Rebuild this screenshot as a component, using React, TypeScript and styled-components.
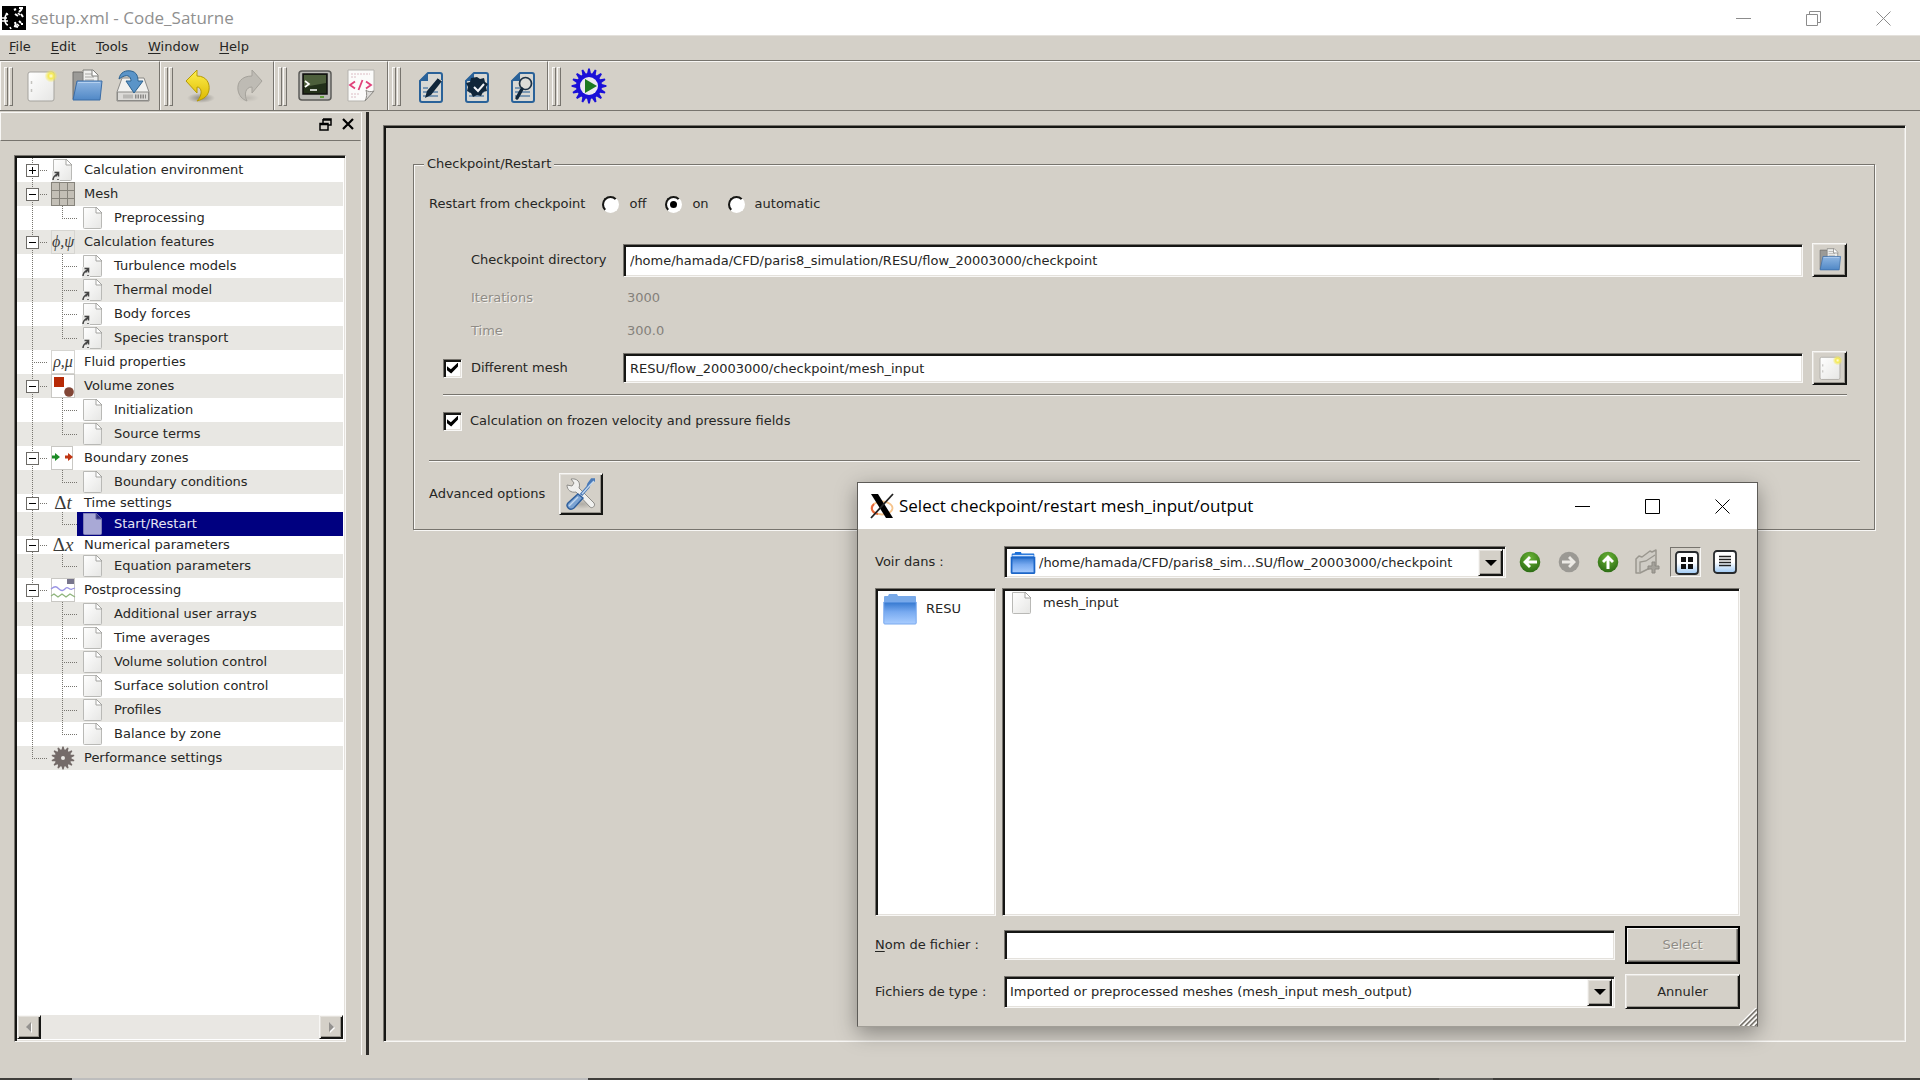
import React from "react";
import styled, { createGlobalStyle, css } from "styled-components";

const c = {
  face: "#d4d0c8",
  text: "#262624",
  dim: "#8f8c86",
  dark: "#77746e",
  black: "#161614",
  light: "#f8f7f5",
  soft: "#e4e1dc",
  zebra: "#e8e7e3",
  navy: "#000080",
};

const uiFont = `"DejaVu Sans", Verdana, sans-serif`;
const titleFont = `"Open Sans", "Segoe UI", sans-serif`;

const Global = createGlobalStyle`
  *, *::before, *::after { box-sizing: border-box; }
  body { margin: 0; background: ${c.face}; color: ${c.text}; font: 13px/20px ${uiFont}; }
  button, input, select { font: inherit; color: inherit; }
  button { padding: 0; border: 0; background: none; }
  svg { display: block; flex: none; overflow: visible; }
`;

const sunken = css`
  border: 1px solid;
  border-color: ${c.dark} ${c.light} ${c.light} ${c.dark};
  box-shadow: inset 2px 2px 0 ${c.black}, inset -1px -1px 0 ${c.soft};
`;

const raised = css`
  border: 1px solid;
  border-color: ${c.light} ${c.black} ${c.black} ${c.light};
  box-shadow: inset 1px 1px 0 ${c.soft}, inset -1px -1px 0 ${c.black}, inset -2px -2px 0 #98958e;
  background: ${c.face};
`;

/* ---------- window frame ---------- */

const Shell = styled.div`
  position: relative;
  display: flex;
  flex-direction: column;
  min-height: 100vh;
`;

const TitleBar = styled.header<{ $dialog?: boolean }>`
  display: flex;
  align-items: center;
  gap: 5px;
  height: ${(p) => (p.$dialog ? 46 : 35)}px;
  padding: ${(p) => (p.$dialog ? "0 11px 0 12px" : "0 13px 0 2px")};
  background: #fff;
  color: ${(p) => (p.$dialog ? "#000" : "#909090")};
  font: 17px/24px ${titleFont};
`;

const Title = styled.h1`
  flex: 1;
  margin: 0;
  font: inherit;
`;

const WindowButtons = styled.div`
  display: flex;
  gap: 24px;
`;

const WindowButton = styled.button`
  display: grid;
  place-items: center;
  width: 46px;
  height: 30px;
`;

const MenuBar = styled.nav`
  display: flex;
  gap: 20px;
  height: 25px;
  padding: 1px 9px 0;
  border-top: 1px solid ${c.soft};
`;

const MenuItem = styled.button`
  height: 20px;
  line-height: 20px;
`;

const Mnemonic = styled.span`
  text-decoration: underline;
  text-underline-offset: 2px;
`;

const ToolBar = styled.div`
  display: flex;
  height: 51px;
  margin-bottom: 1px;
  border-top: 1px solid ${c.dark};
  border-bottom: 1px solid ${c.dark};
`;

const ToolGroup = styled.div`
  display: flex;
  align-items: center;
  padding: 0 3px;
  border-top: 1px solid ${c.light};
  border-left: 1px solid ${c.light};
  border-right: 1px solid ${c.dark};
  &:last-child { flex: 1; border-right: 0; }
`;

const Handle = styled.span`
  display: flex;
  gap: 1px;
  width: 9px;
  height: 39px;
  margin-right: 5px;
  &::before, &::after {
    content: "";
    flex: 1;
    border: 1px solid;
    border-color: ${c.light} ${c.dark} ${c.dark} ${c.light};
  }
`;

const ToolButton = styled.button`
  display: grid;
  place-items: center;
  width: 46px;
  height: 42px;
`;

/* ---------- dock ---------- */

const Body = styled.div`
  display: flex;
  flex: 1;
  margin-bottom: 23px;
`;

const Dock = styled.aside`
  display: flex;
  flex-direction: column;
  width: 362px;
  border-right: 1px solid ${c.light};
`;

const DockHeader = styled.div`
  display: flex;
  justify-content: flex-end;
  gap: 9px;
  height: 29px;
  padding: 4px 5px 0 0;
  border: 1px solid;
  border-color: ${c.light} ${c.face} ${c.dark} ${c.light};
`;

const DockButton = styled.button`
  display: grid;
  place-items: center;
  width: 14px;
  height: 14px;
`;

const Splitter = styled.div`
  width: 7px;
  border-right: 3px solid #2e2c29;
`;

const TreeBox = styled.div`
  display: flex;
  flex: 1;
  flex-direction: column;
  justify-content: space-between;
  margin: 14px 15px 13px 14px;
  padding: 2px;
  background: #fff;
  ${sunken}
`;

const Tree = styled.ul`
  margin: 0;
  padding: 0;
  list-style: none;
`;

const Row = styled.li<{ $short?: boolean }>`
  display: flex;
  height: ${(p) => (p.$short ? 18 : 24)}px;
  padding-left: 9px;
  &:nth-child(even) { background: ${c.zebra}; }
`;

const dotsV = "repeating-linear-gradient(#77756f 0 1px, transparent 1px 2px)";
const dotsH = "repeating-linear-gradient(90deg, #77756f 0 1px, transparent 1px 2px)";

type Branch = "pass" | "tee" | "end";

const Guide = styled.span<{ $line: Branch; $child?: boolean }>`
  display: flex;
  align-items: center;
  width: 21px;
  margin-left: ${(p) => (p.$child ? 9 : 0)}px;
  background-repeat: no-repeat;
  background-image: ${(p) => (p.$line === "pass" ? dotsV : `${dotsV}, ${dotsH}`)};
  background-size: 1px ${(p) => (p.$line === "end" ? "50%" : "100%")}, 15px 1px;
  background-position: 6px 0, 6px 50%;
`;

const Expander = styled.button`
  display: grid;
  place-items: center;
  width: 13px;
  height: 13px;
  border: 1px solid #6d6b67;
  background: #fff;
`;

const Node = styled.span<{ $selected?: boolean; $child?: boolean }>`
  display: flex;
  flex: 1;
  align-items: center;
  gap: ${(p) => (p.$child ? 10 : 9)}px;
  padding-left: ${(p) => (p.$child ? 5 : 4)}px;
  white-space: nowrap;
  background: ${(p) => (p.$selected ? c.navy : "transparent")};
  color: ${(p) => (p.$selected ? "#e6e6f4" : "inherit")};
`;

const ScrollBar = styled.div`
  display: flex;
  justify-content: space-between;
  height: 24px;
  background: #e9e7e3;
`;

const ScrollButton = styled.button`
  display: grid;
  place-items: center;
  width: 24px;
  height: 24px;
  ${raised}
`;

/* ---------- settings panel ---------- */

const Panel = styled.main`
  flex: 1;
  min-width: 0;
  margin: 13px 14px;
  padding: 28px 30px 27px 29px;
  ${sunken}
`;

const Group = styled.fieldset`
  min-width: 0;
  margin: 0;
  padding: 20px 14px 14px 15px;
  border: 1px solid ${c.dark};
  box-shadow: 1px 1px 0 ${c.light}, inset 1px 1px 0 ${c.light};
`;

const Legend = styled.legend`
  margin-left: -5px;
  padding: 0 3px;
  background: ${c.face};
`;

const Line = styled.div`
  display: flex;
  align-items: center;
  min-height: 20px;
`;

const RadioLabel = styled.label`
  display: flex;
  align-items: center;
  gap: 10px;
  margin-left: 17px;
  & + & { margin-left: 19px; }
`;

const Radio = styled.input`
  appearance: none;
  display: grid;
  place-items: center;
  width: 17px;
  height: 17px;
  margin: 0;
  border: 2px solid;
  border-color: ${c.black} #fff #fff ${c.black};
  border-radius: 50%;
  background: #fff;
  &:checked::before {
    content: "";
    width: 7px;
    height: 7px;
    border-radius: 50%;
    background: #000;
  }
`;

const Indent = styled.div`
  margin: 29px 13px 0 14px;
`;

const Fields = styled.div`
  display: grid;
  grid-template-columns: 28px 152px 1fr 35px;
  grid-template-rows: 34px 25px 25px 34px;
  row-gap: 8px;
  align-items: center;
`;

const Label = styled.label<{ $dim?: boolean }>`
  grid-column: 2;
  color: ${(p) => (p.$dim ? c.dim : "inherit")};
  text-shadow: ${(p) => (p.$dim ? "1px 1px 0 #f4f2ee" : "none")};
`;

const Value = styled.output`
  grid-column: 3 / 5;
  padding-left: 4px;
  color: #84817b;
`;

const TextBox = styled.input<{ $tall?: boolean }>`
  width: 100%;
  height: ${(p) => (p.$tall ? 33 : 30)}px;
  padding: 0 6px;
  background: #fff;
  ${sunken}
`;

const FieldBox = styled(TextBox)`
  width: auto;
  margin-right: 9px;
`;

const SquareButton = styled.button<{ $large?: boolean }>`
  display: grid;
  place-items: center;
  width: ${(p) => (p.$large ? 44 : 35)}px;
  height: ${(p) => (p.$large ? 42 : 34)}px;
  ${raised}
`;

const Check = styled.input`
  appearance: none;
  display: grid;
  place-items: center;
  width: 19px;
  height: 19px;
  margin: 0;
  background: #fff;
  ${sunken}
  &:checked::before {
    content: "";
    width: 11px;
    height: 11px;
    background: #000;
    clip-path: polygon(0 35%, 35% 62%, 100% 0, 100% 36%, 38% 100%, 0 70%);
  }
`;

const Rule = styled.hr<{ $space: number }>`
  height: 2px;
  margin: ${(p) => p.$space}px 0 0;
  border: 0;
  border-top: 1px solid ${c.dark};
  border-bottom: 1px solid ${c.light};
`;

const FrozenLabel = styled.label`
  display: flex;
  align-items: center;
  gap: 8px;
  margin-top: 15px;
`;

const Advanced = styled(Line)`
  gap: 14px;
  margin-top: 11px;
`;

/* ---------- file dialog ---------- */

const Dialog = styled.section`
  position: absolute;
  top: 482px;
  left: 857px;
  width: 901px;
  border: 1px solid #5d5b57;
  border-bottom-color: #a19e97;
  background: ${c.face};
  box-shadow: 0 6px 20px rgba(0, 0, 0, 0.36);
`;

const DialogBody = styled.form`
  display: flex;
  flex-direction: column;
  gap: 10px;
  padding: 17px;
`;

const DialogRow = styled.div`
  display: grid;
  grid-template-columns: 129px 1fr 115px;
  align-items: center;
`;

const LookIn = styled.div`
  display: flex;
  align-items: center;
  gap: 8px;
`;

const LookInLabel = styled.label`
  width: 121px;
`;

const Combo = styled.div`
  display: flex;
  flex: 1;
  align-items: center;
  height: 32px;
  margin-right: 10px;
  padding: 2px 2px 1px 5px;
  background: #fff;
  ${sunken}
  ${LookIn} & { margin-right: 0; padding-left: 6px; gap: 4px; }
`;

const Select = styled.select`
  appearance: none;
  flex: 1;
  min-width: 0;
  height: 26px;
  padding: 0;
  border: 0;
  background: transparent;
`;

const Arrow = styled.span`
  display: grid;
  place-items: center;
  width: 25px;
  height: 27px;
  ${raised}
`;

const NavButton = styled.button<{ $on?: boolean }>`
  display: grid;
  place-items: center;
  width: 31px;
  height: 30px;
  border: 1px solid transparent;
  ${(p) => p.$on && css`
    padding: 2px 0 0 2px;
    border-color: ${c.dark} ${c.light} ${c.light} ${c.dark};
  `}
`;

const Lists = styled.div`
  display: grid;
  grid-template-columns: 121px 1fr;
  gap: 6px;
  height: 328px;
`;

const List = styled.ul`
  margin: 0;
  padding: 2px 7px;
  list-style: none;
  background: #fff;
  ${sunken}
`;

const Item = styled.li<{ $big?: boolean }>`
  display: flex;
  align-items: center;
  gap: 9px;
  height: ${(p) => (p.$big ? 36 : 24)}px;
`;

const NameBox = styled(TextBox)`
  width: auto;
  margin-right: 10px;
`;

const PushButton = styled.button<{ $default?: boolean }>`
  height: ${(p) => (p.$default ? 38 : 35)}px;
  ${raised}
  ${(p) => p.$default && css`
    border: 2px solid #000;
    box-shadow: inset 1px 1px 0 ${c.light}, inset -1px -1px 0 #5f5d58, inset -2px -2px 0 #98958e;
  `}
  &:disabled { color: ${c.dim}; text-shadow: 1px 1px 0 #f4f2ee; }
`;

const Grip = styled.span`
  position: absolute;
  right: 0;
  bottom: 0;
  overflow: hidden;
`;

/* ---------- bottom edge ---------- */

const Edge = styled.footer`
  display: grid;
  grid-template-columns: 72px 516px 851px 54px 1fr;
  height: 2px;
  background: #3f3e3b;
`;

const EdgePart = styled.span<{ $tone: string }>`
  background: ${(p) => p.$tone};
`;

/* ---------- drawings ---------- */

const AppIcon = () => (
  <svg width="24" height="24" viewBox="0 0 24 24">
    <rect width="24" height="24" fill="#000" />
    <g stroke="#fff" fill="none" strokeWidth="1.6">
      <path d="M6 8C2 8 2 18 6 19M0 12h5M0 15h6M4 7l2 2" />
      <path d="M12 4l2-1M17 2h4M20 3l-3 3M13 8l3 2M19 8l2 3M13 16l1 4M17 15l2 2M12 20l4 1M20 19v-2" strokeWidth="2" />
      <path d="M16 7l2 2M15 18l2 2M8 21l1 2" />
    </g>
  </svg>
);

const Defs = styled.svg`
  position: absolute;
`;

const Gradients = () => (
  <Defs width="0" height="0" aria-hidden="true">
    <defs>
      <linearGradient id="paper" x1="0" y1="0" x2="1" y2="1"><stop offset="0" stopColor="#fff" /><stop offset="1" stopColor="#e6e6e4" /></linearGradient>
      <linearGradient id="blue" x1="0" y1="0" x2="0" y2="1"><stop offset="0" stopColor="#8fb6e2" /><stop offset="1" stopColor="#5088c6" /></linearGradient>
      <linearGradient id="folder" x1="0" y1="0" x2="0" y2="1"><stop offset="0" stopColor="#3377cf" /><stop offset=".45" stopColor="#78aaf0" /><stop offset="1" stopColor="#a9cdff" /></linearGradient>
      <linearGradient id="gold" x1="0" y1="0" x2="0" y2="1"><stop offset="0" stopColor="#fff04d" /><stop offset="1" stopColor="#dcb800" /></linearGradient>
      <linearGradient id="tile" x1="0" y1="0" x2="0" y2="1"><stop offset=".5" stopColor="#fff" /><stop offset="1" stopColor="#9cc8f4" /></linearGradient>
      <radialGradient id="green" cx=".5" cy=".3" r=".7"><stop offset="0" stopColor="#6bb536" /><stop offset="1" stopColor="#2c6c14" /></radialGradient>
      <radialGradient id="glow"><stop offset="0" stopColor="#fffde0" /><stop offset=".4" stopColor="#f5ea55" /><stop offset="1" stopColor="#f5ea55" stopOpacity="0" /></radialGradient>
      <radialGradient id="shade"><stop offset="0" stopColor="#000" stopOpacity=".35" /><stop offset="1" stopColor="#000" stopOpacity="0" /></radialGradient>
    </defs>
  </Defs>
);

const NewIcon = ({ size = 34 }: { size?: number }) => (
  <svg width={size} height={size} viewBox="0 0 34 34">
    <rect x="4" y="3" width="26" height="29" rx="2" fill="url(#paper)" stroke="#a5a39e" />
    <path d="M7.500 12v3M7.500 20v3" stroke="#c4c3bf" strokeWidth="1.500" />
    <circle cx="27" cy="7" r="6.500" fill="url(#glow)" />
  </svg>
);

const OpenIcon = ({ size = 34 }: { size?: number }) => (
  <svg width={size} height={size} viewBox="0 0 34 34">
    <path d="M3 3h9l2 2v25H3z" fill="#9b9a97" stroke="#706f6c" />
    <path d="M13 14V1h10l5 5v8z" fill="#efefed" stroke="#7f7e7b" />
    <path d="M15 5h7M15 8h9M15 11h9" stroke="#a8a7a4" />
    <path d="M22 1v6h6" fill="#fff" stroke="#7f7e7b" />
    <path d="M7 12h25l-2 19H3z" fill="url(#blue)" stroke="#3a6ca6" strokeLinejoin="round" />
    <path d="M8 13.500h22" stroke="#b4d0ef" />
  </svg>
);

const SaveIcon = () => (
  <svg width="34" height="34" viewBox="0 0 34 34">
    <path d="M6 9h22l5 14v9H1v-9z" fill="#f1f1ef" stroke="#8b8a87" strokeLinejoin="round" />
    <path d="M1.500 23h31v8.500h-31z" fill="#dbdad7" stroke="#8b8a87" />
    <path d="M7 27.500h10" stroke="#b9b8b5" strokeWidth="4" />
    <path d="M19 27.500h11" stroke="#8a8987" strokeWidth="4" strokeDasharray="1.500 1" />
    <path d="M3 10C4 3 10 1 15 2c6 1 7 6 7 10h5l-9 12-8-12h5c0-5-4-8-12-2z" fill="#5a94c8" stroke="#2d628f" strokeLinejoin="round" />
  </svg>
);

const UndoIcon = () => (
  <svg width="34" height="34" viewBox="0 0 34 34">
    <ellipse cx="17" cy="29" rx="14" ry="5" fill="url(#shade)" />
    <path d="M2 12L13 1v6c10 0 13 8 12 14-1 6-5 9-12 11 6-6 5-14 0-14v6z" fill="url(#gold)" stroke="#b59a08" strokeLinejoin="round" />
  </svg>
);

const RedoIcon = () => (
  <svg width="34" height="34" viewBox="0 0 34 34">
    <ellipse cx="18" cy="29" rx="11" ry="4" fill="url(#shade)" opacity=".3" />
    <path d="M32 12L22 1v6C11 7 7 14 8 21c1 6 4 9 9 11-3-6-2-14 5-14v6z" fill="#bebbb4" stroke="#a5a29b" strokeLinejoin="round" />
  </svg>
);

const TerminalIcon = () => (
  <svg width="34" height="34" viewBox="0 0 34 34">
    <rect x="1" y="2" width="32" height="29" rx="3" fill="#babab6" stroke="#5c5c59" strokeWidth="1.500" />
    <rect x="5" y="5" width="24" height="20" fill="#22301a" stroke="#111" strokeWidth="1.500" />
    <path d="M6 6h22v8L6 18z" fill="#4d5f3c" />
    <path d="M7 12l4 3-4 3M12 21h7" stroke="#fff" strokeWidth="1.600" fill="none" />
    <path d="M22 28h4" stroke="#5f9d3a" strokeWidth="2" />
  </svg>
);

const XmlIcon = () => (
  <svg width="34" height="34" viewBox="0 0 34 34">
    <path d="M4 1h26v21l-9 10H4z" fill="#fbfbfa" stroke="#b5b3ae" />
    <path d="M7 5h19M7 8h5M7 25h8M7 28h6" stroke="#dcbcc4" strokeDasharray="2 1" />
    <path d="M11 12.500l-5 3.500 5 3.500M22 12.500l5 3.500-5 3.500M18.500 11l-4 10" fill="none" stroke="#e0417a" strokeWidth="1.800" />
    <path d="M30 22c-3 1-6 1-8-1 1 4 1 7-1 11z" fill="#deddda" stroke="#8d8b87" />
  </svg>
);

const DocIcon = ({ kind }: { kind: "edit" | "check" | "find" }) => (
  <svg width="34" height="34" viewBox="0 0 34 34">
    <path d="M16 4h12q2 0 2 2v25q0 2-2 2H10q-2 0-2-2V12z" fill="#d8d8d4" stroke="#2a6299" strokeWidth="2" strokeLinejoin="round" />
    <path d="M7 12l9-8v8z" fill="#2a6299" />
    <path d="M11 19h5M11 23h15M11 27h15" stroke="#5c83a8" strokeWidth="1.400" />
    {kind === "edit" && <g><path d="M26 9l4 3-11 14-6 3 2-7z" fill="#10263a" /><path d="M26 9l4 3" stroke="#d8d8d4" /></g>}
    {kind === "check" && <g><path d="M19 8l3 2 4-1 1 4 3 2-2 3 1 4-4 1-2 4-4-1-4 2-2-4-4-2 1-4-2-4 4-1 1-4z" fill="#10263a" /><path d="M16 18l4 4 6-7" stroke="#f2f5f8" strokeWidth="2" fill="none" /></g>}
    {kind === "find" && <g><circle cx="21.500" cy="14.500" r="6" fill="#dcdcd8" stroke="#1c3145" strokeWidth="1.700" /><path d="M18 20l-5 9" stroke="#10263a" strokeWidth="3.400" strokeLinecap="round" /></g>}
  </svg>
);

const teeth = (n: number, r1: number, r2: number, cx: number, cy: number) =>
  Array.from({ length: n * 4 }, (_, i) => {
    const a = ((i - 0.5) / (n * 4)) * Math.PI * 2 - Math.PI / 2;
    const r = i % 4 < 2 ? r1 : r2;
    return `${(cx + r * Math.cos(a)).toFixed(2)},${(cy + r * Math.sin(a)).toFixed(2)}`;
  }).join(" ");

const RunIcon = () => (
  <svg width="36" height="36" viewBox="0 0 36 36">
    <polygon points={teeth(16, 17.5, 13, 18, 18)} fill="#1a10d8" />
    <circle cx="18" cy="18" r="9" fill="#eceaf0" />
    <path d="M14 11l12 7-12 7z" fill="#1c7a20" />
  </svg>
);

const PageIcon = ({ link, faded, wide }: { link?: boolean; faded?: boolean; wide?: boolean }) => (
  <svg width={wide ? 24 : 22} height="24" viewBox={wide ? "-1 0 24 24" : "0 0 22 24"}>
    <path d="M1.500 1.500h13l5 5v15q0 1-1 1h-16q-1 0-1-1z" fill={faded ? "#a9a9d6" : "url(#paper)"} stroke={faded ? "#8080b8" : "#b9b9b6"} />
    <path d="M14 1v6h6z" fill={faded ? "#34347c" : "#fff"} stroke={faded ? "#5c5ca4" : "#a3a3a0"} />
    {link && <g><path d="M0 13h8v11H0z" fill="#e8e8e6" /><path d="M1 22c0-3 1-4 4-6M2.500 14.500h4v4M6.500 14.500l-3 4M6 21v1" fill="none" stroke="#444" strokeWidth="1.500" /></g>}
  </svg>
);

const MathIcon = ({ text, upright, frame }: { text: string; upright?: string; frame?: boolean }) => (
  <svg width="24" height="24" viewBox="0 0 24 24">
    {frame && <rect x=".5" y=".5" width="23" height="23" fill="none" stroke="#d6d5d1" />}
    <text x="12" y={frame ? 17 : 18} textAnchor="middle" fontFamily="'Liberation Serif', serif" fontStyle="italic" fontSize={frame ? 16 : 19} fill="#3a3a38">
      {upright && <tspan fontStyle="normal">{upright}</tspan>}
      {text}
    </text>
  </svg>
);

const MeshIcon = () => (
  <svg width="24" height="24" viewBox="0 0 24 24">
    <rect width="24" height="24" fill="#c3bfb6" />
    <path d="M.5 0v24M8.500 0v24M16.500 0v24M23.500 0v24M0 .5h24M0 8.500h24M0 16.500h24M0 23.500h24" stroke="#86837b" />
  </svg>
);

const VolumeIcon = () => (
  <svg width="24" height="24" viewBox="0 0 24 24">
    <rect x=".5" y=".5" width="23" height="23" fill="#fff" stroke="#c9c8c4" />
    <rect x="3" y="3" width="10" height="10" fill="#b72a06" />
    <circle cx="18" cy="18" r="4.800" fill="#824636" />
  </svg>
);

const BoundaryIcon = () => (
  <svg width="24" height="24" viewBox="0 0 24 24">
    <rect x=".5" y=".5" width="21" height="23" fill="#fff" stroke="#c9c8c4" />
    <path d="M1 9.500h3V7l5 4-5 4v-2.500H1z" fill="#1b8a24" />
    <path d="M14 9.500h3V7l5 4-5 4v-2.500h-3z" fill="#c03512" />
  </svg>
);

const PostIcon = () => (
  <svg width="24" height="24" viewBox="0 0 24 24">
    <rect x=".5" y=".5" width="23" height="23" fill="#fff" stroke="#c9c8c4" />
    <rect x="16" y="1" width="7" height="5" fill="#77758c" />
    <path d="M0 11c4-3 5-3 8 0s5 1 7-1 4 3 6 1l3-1" fill="none" stroke="#9a94e4" strokeWidth="1.300" />
    <path d="M0 18l3-2 4 3 4-3 4 3 4-3 5 3" fill="none" stroke="#8fb57c" strokeWidth="1.300" />
  </svg>
);

const GearIcon = () => (
  <svg width="24" height="24" viewBox="0 0 24 24">
    <polygon points={teeth(14, 11.5, 8.5, 12, 12)} fill="#746b69" />
    <circle cx="12" cy="12" r="2" fill="#e8e7e3" />
  </svg>
);

const FolderIcon = ({ large }: { large?: boolean }) => (
  <svg width={large ? 34 : 24} height={large ? 31 : 22} viewBox="0 0 34 31">
    <path d="M1 3q0-1 1-1h3l1-2h8l1 2h17q1 0 1 1v6H1z" fill={large ? "#78a9e8" : "#1a6fd8"} />
    <path d="M.8 8h32.400v21q0 1-1 1H1.800q-1 0-1-1z" fill="url(#folder)" stroke={large ? "#78a9ee" : "#1c66c8"} strokeWidth={large ? 1 : 2.5} />
    {!large && <path d="M2 5h30" stroke="#cfe2fb" strokeWidth="2" />}
  </svg>
);

const ToolsIcon = () => (
  <svg width="34" height="34" viewBox="0 0 34 34">
    <ellipse cx="18" cy="27" rx="14" ry="5" fill="url(#shade)" opacity=".5" />
    <path d="M3 8l5 1 2-3-3-4c6-1 10 3 8 9l15 15c2 3-2 6-4 4L12 15c-5 1-9-2-9-7z" fill="#f0f0ee" stroke="#8d8c88" strokeLinejoin="round" />
    <path d="M31 3l-3 0-3 4-1 3-7 8" stroke="#4a7ab8" strokeWidth="3.400" fill="none" />
    <path d="M30 4l-4 4-8 9" stroke="#c3d8ee" strokeWidth="1.300" fill="none" />
    <path d="M14 17l5 4-9 10c-4 3-9-1-6-5z" fill="#7ba3d2" stroke="#2f5f9c" strokeWidth="1.400" />
    <path d="M14 20l-9 9" stroke="#c3d8ee" strokeWidth="1.500" />
  </svg>
);

const XLogo = () => (
  <svg width="24" height="24" viewBox="0 0 24 24">
    <ellipse cx="12" cy="14" rx="10.500" ry="6.500" fill="none" stroke="#f6c48c" strokeWidth="1.800" />
    <path d="M4 10c-4 4-2 9 4 10" fill="none" stroke="#e8683c" strokeWidth="2" />
    <path d="M1 0h7l15 24h-7z" fill="#000" />
    <path d="M23 0L1 24" stroke="#222" strokeWidth="1.800" />
  </svg>
);

const RoundArrow = ({ dir, off }: { dir: number; off?: boolean }) => (
  <svg width="22" height="22" viewBox="0 0 22 22">
    <circle cx="11" cy="11" r="10.300" fill={off ? "#9b9994" : "url(#green)"} />
    <path d="M4 11l6-6 2 2-2.500 2.500H18v3H9.500L12 15l-2 2z" fill={off ? "#eceae5" : "#fff"} transform={`rotate(${dir} 11 11)`} />
  </svg>
);

const NewFolderIcon = () => (
  <svg width="26" height="26" viewBox="0 0 26 26">
    <path d="M2 24V10l3-3 3 1 8-6 2 1 4-2v15L6 24z" fill="#cfccc5" stroke="#9a978f" strokeWidth="1.500" strokeLinejoin="round" />
    <path d="M6 23V13l6-1 9-6" fill="none" stroke="#9a978f" strokeWidth="1.300" />
    <path d="M18 13h3v4h4v3h-4v4h-3v-4h-4v-3h4z" fill="#a5a29b" stroke="#8d8a83" />
  </svg>
);

const ViewIcon = ({ list }: { list?: boolean }) => (
  <svg width="24" height="24" viewBox="0 0 24 24">
    <rect x="1" y="1" width="22" height="22" rx="3" fill="url(#tile)" stroke="#26292c" strokeWidth="1.800" />
    {list
      ? <path d="M6 6.500h12M6 9.500h12M6 12.500h12M6 15.500h12" stroke="#222" strokeWidth="1.500" />
      : <path d="M6 6h5v5H6zM13 6h5v5h-5zM6 13h5v5H6zM13 13h5v5h-5z" fill="#111" />}
  </svg>
);

const Glyph = ({ kind, color }: { kind: "min" | "restore" | "max" | "close"; color: string }) => (
  <svg width="16" height="16" viewBox="0 0 16 16" fill="none" stroke={color} strokeWidth="1">
    {kind === "min" && <path d="M0 8.500h15" />}
    {kind === "max" && <path d="M.5 1.500h14v14H.5z" />}
    {kind === "restore" && <path d="M.5 4.500h11v11H.5zM3.500 4V1.500h11v11H12" />}
    {kind === "close" && <path d="M.5 1.500l14 14M14.500 1.500l-14 14" />}
  </svg>
);

const DropArrow = () => (
  <svg width="12" height="12" viewBox="0 0 12 12"><path d="M0 3h12L6 9z" fill="#000" /></svg>
);

const ScrollArrow = ({ right }: { right?: boolean }) => (
  <svg width="12" height="12" viewBox="0 0 12 12">
    <path d={right ? "M5 2v10l5-5z" : "M9 2v10L4 7z"} fill="#fff" />
    <path d={right ? "M4 1v10l5-5z" : "M8 1v10L3 6z"} fill="#94928f" />
  </svg>
);

/* ---------- content ---------- */

type Entry = {
  text: string;
  icon: React.ReactNode;
  child?: boolean;
  last?: boolean;
  leaf?: boolean;
  closed?: boolean;
  short?: boolean;
  selected?: boolean;
};

const child = (text: string, opts: Partial<Entry> & { link?: boolean } = {}): Entry => ({
  text,
  child: true,
  icon: <PageIcon link={opts.link} faded={opts.selected} />,
  last: opts.last,
  selected: opts.selected,
});

const entries: Entry[] = [
  { text: "Calculation environment", icon: <PageIcon link wide />, closed: true },
  { text: "Mesh", icon: <MeshIcon /> },
  child("Preprocessing", { last: true }),
  { text: "Calculation features", icon: <MathIcon text="ϕ,ψ" frame /> },
  child("Turbulence models", { link: true }),
  child("Thermal model", { link: true }),
  child("Body forces", { link: true }),
  child("Species transport", { link: true, last: true }),
  { text: "Fluid properties", icon: <MathIcon text="ρ,μ" frame />, leaf: true },
  { text: "Volume zones", icon: <VolumeIcon /> },
  child("Initialization"),
  child("Source terms", { last: true }),
  { text: "Boundary zones", icon: <BoundaryIcon /> },
  child("Boundary conditions", { last: true }),
  { text: "Time settings", icon: <MathIcon upright="Δ" text="t" />, short: true },
  child("Start/Restart", { last: true, selected: true }),
  { text: "Numerical parameters", icon: <MathIcon upright="Δ" text="x" />, short: true },
  child("Equation parameters", { last: true }),
  { text: "Postprocessing", icon: <PostIcon /> },
  child("Additional user arrays"),
  child("Time averages"),
  child("Volume solution control"),
  child("Surface solution control"),
  child("Profiles"),
  child("Balance by zone", { last: true }),
  { text: "Performance settings", icon: <GearIcon />, leaf: true, last: true },
];

const menus = ["File", "Edit", "Tools", "Window", "Help"];

const tools: { name: string; icon: React.ReactNode }[][] = [
  [{ name: "New", icon: <NewIcon /> }, { name: "Open", icon: <OpenIcon /> }, { name: "Save", icon: <SaveIcon /> }],
  [{ name: "Undo", icon: <UndoIcon /> }, { name: "Redo", icon: <RedoIcon /> }],
  [{ name: "Terminal", icon: <TerminalIcon /> }, { name: "XML source", icon: <XmlIcon /> }],
  [
    { name: "Edit user files", icon: <DocIcon kind="edit" /> },
    { name: "Check user files", icon: <DocIcon kind="check" /> },
    { name: "View log files", icon: <DocIcon kind="find" /> },
  ],
  [{ name: "Run", icon: <RunIcon /> }],
];

const TreeRow = ({ e }: { e: Entry }) => (
  <Row $short={e.short} role="treeitem" aria-selected={!!e.selected}>
    <Guide $line={e.child ? "pass" : e.last ? "end" : "tee"}>
      {!e.child && !e.leaf && (
        <Expander aria-label={e.closed ? "Expand" : "Collapse"}>
          <svg width="7" height="7" viewBox="0 0 7 7"><path d={e.closed ? "M0 3.500h7M3.500 0v7" : "M0 3.500h7"} stroke="#000" /></svg>
        </Expander>
      )}
    </Guide>
    {e.child && <Guide $child $line={e.last ? "end" : "tee"} />}
    <Node $selected={e.selected} $child={e.child}>
      {e.icon}
      {e.text}
    </Node>
  </Row>
);

const FileDialog = () => (
  <Dialog role="dialog" aria-labelledby="dialog-title">
    <TitleBar $dialog>
      <XLogo />
      <Title as="h2" id="dialog-title">Select checkpoint/restart mesh_input/output</Title>
      <WindowButtons>
        <WindowButton aria-label="Minimize"><Glyph kind="min" color="#000" /></WindowButton>
        <WindowButton aria-label="Maximize"><Glyph kind="max" color="#000" /></WindowButton>
        <WindowButton aria-label="Close"><Glyph kind="close" color="#000" /></WindowButton>
      </WindowButtons>
    </TitleBar>
    <DialogBody onSubmit={(e) => e.preventDefault()}>
      <LookIn>
        <LookInLabel htmlFor="look">Voir dans :</LookInLabel>
        <Combo>
          <FolderIcon />
          <Select id="look"><option>/home/hamada/CFD/paris8_sim...SU/flow_20003000/checkpoint</option></Select>
          <Arrow><DropArrow /></Arrow>
        </Combo>
        <NavButton type="button" aria-label="Back"><RoundArrow dir={0} /></NavButton>
        <NavButton type="button" aria-label="Forward" disabled><RoundArrow dir={180} off /></NavButton>
        <NavButton type="button" aria-label="Parent directory"><RoundArrow dir={90} /></NavButton>
        <NavButton type="button" aria-label="New folder" disabled><NewFolderIcon /></NavButton>
        <NavButton type="button" aria-label="List view" $on><ViewIcon /></NavButton>
        <NavButton type="button" aria-label="Detail view"><ViewIcon list /></NavButton>
      </LookIn>
      <Lists>
        <List><Item $big><FolderIcon large />RESU</Item></List>
        <List><Item><PageIcon wide />mesh_input</Item></List>
      </Lists>
      <DialogRow>
        <label htmlFor="name"><Mnemonic>N</Mnemonic>om de fichier :</label>
        <NameBox id="name" type="text" />
        <PushButton type="submit" $default disabled>Select</PushButton>
      </DialogRow>
      <DialogRow>
        <label htmlFor="type">Fichiers de type :</label>
        <Combo>
          <Select id="type"><option>Imported or preprocessed meshes (mesh_input mesh_output)</option></Select>
          <Arrow><DropArrow /></Arrow>
        </Combo>
        <PushButton type="button">Annuler</PushButton>
      </DialogRow>
    </DialogBody>
    <Grip>
      <svg width="18" height="18" viewBox="0 0 18 18">
        <path d="M1 18L18 1M6 18L18 6M11 18l7-7M16 18l2-2" stroke="#6f6c66" strokeWidth="1.500" />
        <path d="M-1 18L18 -1M4 18L18 4M9 18l9-9M14 18l4-4" stroke="#fff" strokeWidth="1.200" />
      </svg>
    </Grip>
  </Dialog>
);

export default function App() {
  return (
    <Shell>
      <Global />
      <Gradients />
      <TitleBar>
        <AppIcon />
        <Title>setup.xml - Code_Saturne</Title>
        <WindowButtons>
          <WindowButton aria-label="Minimize"><Glyph kind="min" color="#8c8c8c" /></WindowButton>
          <WindowButton aria-label="Restore"><Glyph kind="restore" color="#8c8c8c" /></WindowButton>
          <WindowButton aria-label="Close"><Glyph kind="close" color="#8c8c8c" /></WindowButton>
        </WindowButtons>
      </TitleBar>
      <MenuBar>
        {menus.map((m) => <MenuItem key={m}><Mnemonic>{m[0]}</Mnemonic>{m.slice(1)}</MenuItem>)}
      </MenuBar>
      <ToolBar role="toolbar">
        {tools.map((group, i) => (
          <ToolGroup key={i}>
            <Handle />
            {group.map((t) => <ToolButton key={t.name} aria-label={t.name}>{t.icon}</ToolButton>)}
          </ToolGroup>
        ))}
      </ToolBar>
      <Body>
        <Dock>
          <DockHeader>
            <DockButton aria-label="Float">
              <svg width="13" height="13" viewBox="0 0 13 13"><path d="M4 1h8v6H9M4 1v4M4 2h8M1 5.500h8V12H1zM1 6.500h8" fill="none" stroke="#000" strokeWidth="1.500" /></svg>
            </DockButton>
            <DockButton aria-label="Close panel">
              <svg width="12" height="12" viewBox="0 0 12 12"><path d="M1 1l10 10M11 1L1 11" stroke="#000" strokeWidth="2.200" /></svg>
            </DockButton>
          </DockHeader>
          <TreeBox>
            <Tree role="tree">{entries.map((e) => <TreeRow key={e.text} e={e} />)}</Tree>
            <ScrollBar>
              <ScrollButton aria-label="Scroll left"><ScrollArrow /></ScrollButton>
              <ScrollButton aria-label="Scroll right"><ScrollArrow right /></ScrollButton>
            </ScrollBar>
          </TreeBox>
        </Dock>
        <Splitter />
        <Panel>
          <Group>
            <Legend>Checkpoint/Restart</Legend>
            <Line>
              Restart from checkpoint
              <RadioLabel><Radio type="radio" name="restart" />off</RadioLabel>
              <RadioLabel><Radio type="radio" name="restart" defaultChecked />on</RadioLabel>
              <RadioLabel><Radio type="radio" name="restart" />automatic</RadioLabel>
            </Line>
            <Indent>
              <Fields>
                <Label htmlFor="dir">Checkpoint directory</Label>
                <FieldBox id="dir" type="text" $tall defaultValue="/home/hamada/CFD/paris8_simulation/RESU/flow_20003000/checkpoint" />
                <SquareButton aria-label="Choose directory"><OpenIcon size={24} /></SquareButton>
                <Label htmlFor="iterations" $dim>Iterations</Label>
                <Value id="iterations">3000</Value>
                <Label htmlFor="time" $dim>Time</Label>
                <Value id="time">300.0</Value>
                <Check type="checkbox" id="different" defaultChecked />
                <Label htmlFor="different">Different mesh</Label>
                <FieldBox aria-label="Mesh file" type="text" defaultValue="RESU/flow_20003000/checkpoint/mesh_input" />
                <SquareButton aria-label="Choose mesh file"><NewIcon size={26} /></SquareButton>
              </Fields>
              <Rule $space={9} />
              <FrozenLabel>
                <Check type="checkbox" defaultChecked />
                Calculation on frozen velocity and pressure fields
              </FrozenLabel>
            </Indent>
            <Rule $space={29} />
            <Advanced>
              Advanced options
              <SquareButton $large aria-label="Advanced options"><ToolsIcon /></SquareButton>
            </Advanced>
          </Group>
        </Panel>
      </Body>
      <Edge>
        <EdgePart $tone="#3f3e3b" />
        <EdgePart $tone="#bdbdbd" />
        <EdgePart $tone="#3f3e3b" />
        <EdgePart $tone="#5e5d5a" />
        <EdgePart $tone="#3f3e3b" />
      </Edge>
      <FileDialog />
    </Shell>
  );
}
